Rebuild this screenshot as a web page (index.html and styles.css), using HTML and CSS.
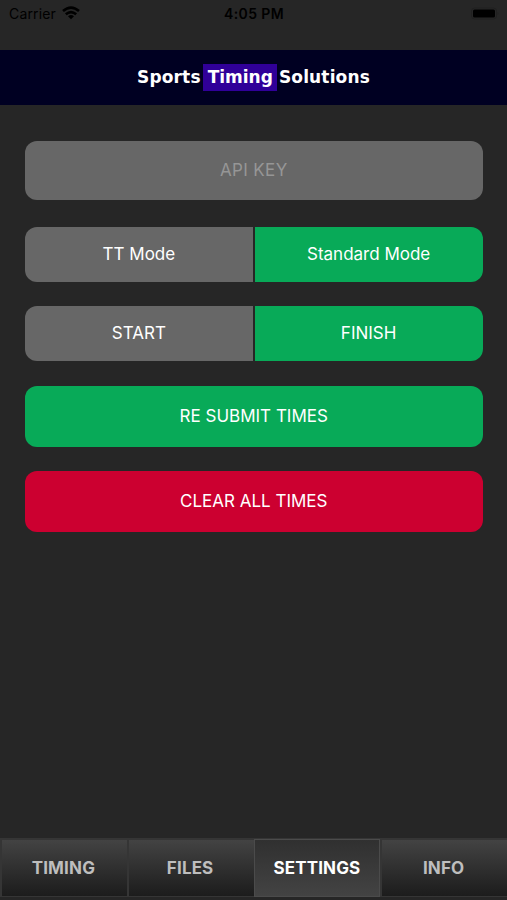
FILE: index.html
```html
<!DOCTYPE html>
<html lang="en">
<head>
<meta charset="utf-8">
<title>Sports Timing Solutions</title>
<link rel="stylesheet" href="styles.css">
</head>
<body>
<div class="status">
  <div class="carrier"><span>Carrier</span>
    <svg class="wifi" width="18" height="14" viewBox="0 0 18 14" fill="none" stroke="#000" stroke-width="2.6"><path d="M1 5.1Q9-1.9 17 5.1M3.8 8.3Q9 3.9 14.2 8.3"/><path d="M6 10.2Q9 7.8 12 10.2L9 13.3Z" fill="#000" stroke="none"/></svg>
  </div>
  <time class="clock">4:05 PM</time>
  <div class="power"><svg width="30" height="14" viewBox="0 0 30 14"><rect x="2.5" y="2" width="25" height="11" rx="3" fill="none" stroke="#202020"/><rect x="4" y="3.5" width="22" height="8" rx="1.5"/><path d="M28.5 6q2 1.5 0 3z" fill="#202020"/></svg></div>
</div>
<header class="brand"><span>Sports</span><span class="mark">Timing</span><span>Solutions</span></header>
<main class="settings">
  <input class="api" type="text" placeholder="API KEY" aria-label="API KEY">
  <div class="toggle mode"><button>TT Mode</button><button class="on">Standard Mode</button></div>
  <div class="toggle point"><button>START</button><button class="on">FINISH</button></div>
  <button class="action submit">RE SUBMIT TIMES</button>
  <button class="action clear">CLEAR ALL TIMES</button>
</main>
<nav class="tabs"><button>TIMING</button><button>FILES</button><button class="active">SETTINGS</button><button>INFO</button></nav>
</body>
</html>
```
FILE: styles.css
```css
* { box-sizing: border-box; }
body { margin: 0; height: 900px; display: flex; flex-direction: column; overflow: hidden; background: #262626; color: #fff; font-family: Inter, "Liberation Sans", sans-serif; }
button, input { margin: 0; padding: 0; border: 0; font: inherit; color: inherit; }
.status { height: 49.5px; flex: none; display: grid; grid-template-columns: 1fr auto 1fr; align-items: start; padding: 5px 8px 0 9px; color: #000; font-size: 14px; line-height: 18px; }
.carrier { display: flex; gap: 6px; letter-spacing: .15px; }
.wifi { margin-top: 1px; }
.clock { font-weight: 600; letter-spacing: .4px; }
.power { display: flex; justify-content: flex-end; padding-top: 1px; }
.brand { height: 55px; flex: none; display: flex; align-items: center; justify-content: center; gap: 2px; padding-top: 1px; background: #000022; font: bold 17px/27px "DejaVu Sans", sans-serif; letter-spacing: .15px; }
.brand .mark { padding: 0 4px 0 5px; background: #300099; letter-spacing: 0; }
.settings { flex: 1; display: flex; flex-direction: column; padding: 36.5px 24.5px 0 25px; font-size: 17px; }
.api { height: 59px; margin-bottom: 26.5px; border-radius: 12px; background: #676767; text-align: center; padding-bottom: 2px; letter-spacing: .35px; }
.api::placeholder { color: #969696; opacity: 1; }
.toggle { display: grid; grid-template-columns: 1fr 1fr; gap: 2px; height: 55px; border-radius: 12px; overflow: hidden; }
.toggle button { padding-bottom: 1px; background: #676767; }
.toggle .on { background: #08aa58; }
.mode { margin-bottom: 24.5px; }
.point { margin-bottom: 24.5px; }
.action { height: 61px; padding-bottom: 1px; border-radius: 12px; }
.submit { margin-bottom: 24.5px; background: #08aa58; }
.clear { background: #cc0030; }
.tabs { height: 62px; flex: none; display: grid; grid-template-columns: repeat(4, 1fr); padding-bottom: 3px; border-top: 1px solid #353535; }
.tabs button { padding: 0 2px 1px 0; border: 1px solid #353535; border-width: 1px 0 1px 2px; background: linear-gradient(#434343, #1c1c1c); color: #bebebe; font-size: 17px; font-weight: 700; letter-spacing: .15px; }
.tabs .active { padding-right: 0; border-color: #4b4b4b; border-width: 1px; background: linear-gradient(#303030, #434343); color: #fff; }
```
